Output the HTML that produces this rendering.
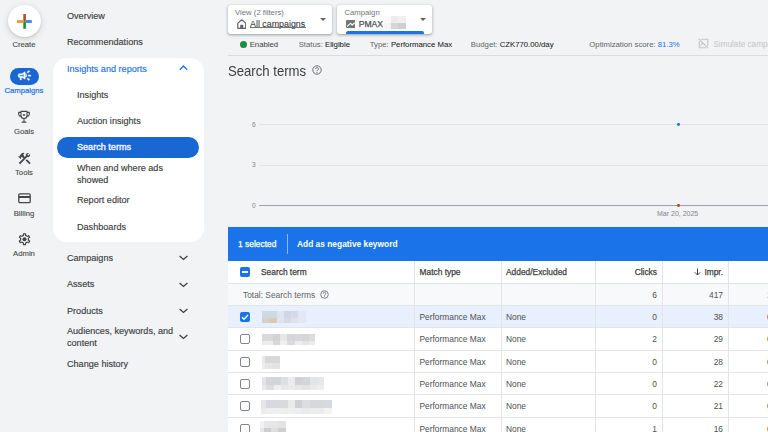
<!DOCTYPE html>
<html><head><meta charset="utf-8">
<style>
*{margin:0;padding:0;box-sizing:border-box}
html,body{width:768px;height:432px;overflow:hidden;background:#f1f3f4;font-family:"Liberation Sans",sans-serif;color:#3c4043}
.a{position:absolute;white-space:nowrap}
.rail{font-size:7.7px;color:#444746;-webkit-text-stroke:0.1px #444746;text-align:center;width:48px;left:0}
.nav{font-size:9.1px;color:#3c4043;left:67px;-webkit-text-stroke:0.15px #3c4043}
.sub{left:77px}
.chev{position:absolute;left:178.9px;width:9px;height:5.5px;overflow:visible}
.st{font-size:7.75px;color:#5f6368}
.st b{font-weight:normal;color:#202124;-webkit-text-stroke:0.05px #202124}
.hline{position:absolute;left:228px;width:540px;height:1px;background:#e3e4e6}
.vline{position:absolute;width:1px;background:#e3e4e6}
.th{font-size:8.4px;color:#3c4043;-webkit-text-stroke:0.25px #3c4043}
.td{font-size:8.4px;color:#4d5156}
.r{text-align:right}
.cb{position:absolute;left:240px;width:10px;height:10px;border:1.7px solid #80868b;border-radius:2px}
.blur{position:absolute;background:#dadce0;filter:blur(1.2px);opacity:.8}
</style></head><body>

<!-- LEFT RAIL -->
<div class="a" style="left:7.8px;top:4.6px;width:33.3px;height:32.8px;border-radius:50%;background:#fff;box-shadow:0 1px 2px rgba(60,64,67,.18),0 2px 6px 1px rgba(60,64,67,.12)"></div>
<svg class="a" style="left:16px;top:13px" width="17" height="17" viewBox="0 0 17 17"><rect x="7.3" y="1" width="2.6" height="7.5" fill="#b0502a"/><rect x="7.3" y="8.5" width="2.6" height="7.3" fill="#1e8e3e"/><rect x="0.9" y="7" width="6.4" height="3" fill="#e6a23c"/><rect x="9.9" y="7" width="5.9" height="3" fill="#4a8af4"/></svg>
<div class="a rail" style="top:39.5px">Create</div>

<div class="a" style="left:9.6px;top:67.7px;width:29px;height:17px;border-radius:9px;background:#1a67d2"></div>
<svg class="a" style="left:16.5px;top:68.3px" width="15" height="15" viewBox="0 0 24 24"><path fill="#fff" stroke="#fff" stroke-width="0.7" d="M18 11v2h4v-2h-4zm-2 6.61c.96.71 2.21 1.65 3.2 2.39.4-.53.8-1.070 1.2-1.6-.99-.74-2.240-1.680-3.2-2.4-.4.54-.8 1.080-1.2 1.61zM20.4 5.6c-.4-.53-.8-1.070-1.200-1.600-.99.74-2.240 1.680-3.200 2.400.4.53.8 1.070 1.200 1.600.96-.72 2.210-1.650 3.200-2.400zM4 9c-1.1 0-2 .9-2 2v2c0 1.1.9 2 2 2h1v4h2v-4h1l5 3V6L8 9H4zm5.03 1.71L11 9.53v4.940l-1.970-1.180-.48-.29H4v-2h4.550l.48-.29zM15.5 12c0-1.330-.58-2.530-1.500-3.350v6.690c.92-.81 1.500-2.010 1.500-3.340z"/></svg>
<div class="a rail" style="top:85.8px;color:#1a73e8;-webkit-text-stroke:0.2px #1a73e8">Campaigns</div>

<svg class="a" style="left:16.8px;top:110px" width="14" height="14" viewBox="0 0 14 14"><path d="M4 1.4h6v4.2a3 3 0 0 1-6 0z M4 2.4H1.7v1.8a2.3 2.3 0 0 0 2.5 2.1 M10 2.4h2.3v1.8a2.3 2.3 0 0 1-2.5 2.1 M7 8.6v3 M4.6 12.1h4.8" fill="none" stroke="#444746" stroke-width="1.1"/><circle cx="7" cy="5" r="1.05" fill="#444746"/></svg>
<div class="a rail" style="top:126.9px">Goals</div>

<svg class="a" style="left:17px;top:150.5px" width="15" height="15" viewBox="0 0 24 24"><path fill="#444746" d="M13.783 15.172l2.121-2.121 5.996 5.996-2.121 2.121zM17.5 10c1.93 0 3.5-1.57 3.5-3.5 0-.58-.16-1.12-.41-1.6l-2.7 2.7-1.49-1.49 2.7-2.7c-.48-.25-1.02-.41-1.6-.41C15.57 3 14 4.57 14 6.5c0 .41.08.8.21 1.16l-1.85 1.85-1.78-1.78.71-.71-1.410-1.410L12 3.49c-1.17-1.17-3.07-1.17-4.24 0L4.22 7.03l1.41 1.41H2.81l-.71.71 3.540 3.540.71-.71V9.15l1.410 1.410.71-.71 1.780 1.780-7.410 7.410 2.120 2.120L16.340 9.790c.36.13.75.21 1.160.21z"/></svg>
<div class="a rail" style="top:167.9px">Tools</div>

<svg class="a" style="left:17.5px;top:193px" width="13" height="10.5" viewBox="0 0 13 10.5"><rect x="0.8" y="0.8" width="11.4" height="8.9" rx="1.2" fill="none" stroke="#444746" stroke-width="1.3"/><rect x="0.8" y="3" width="11.4" height="2" fill="#444746"/></svg>
<div class="a rail" style="top:208.9px">Billing</div>

<svg class="a" style="left:16.7px;top:231.9px" width="15" height="14.4" viewBox="0 0 24 24"><path fill="#444746" d="M19.43 12.98c.04-.32.07-.64.07-.98 0-.34-.03-.66-.07-.98l2.11-1.65c.19-.15.24-.42.12-.64l-2-3.46c-.09-.16-.26-.25-.44-.25-.06 0-.12.01-.17.03l-2.49 1c-.52-.4-1.08-.73-1.69-.98l-.38-2.65C14.46 2.18 14.25 2 14 2h-4c-.25 0-.46.18-.49.42l-.38 2.65c-.61.25-1.17.59-1.69.98l-2.49-1c-.06-.02-.12-.03-.18-.03-.17 0-.34.09-.43.25l-2 3.46c-.13.22-.07.49.12.64l2.11 1.65c-.04.32-.07.65-.07.98 0 .33.03.66.07.98l-2.11 1.65c-.19.15-.24.42-.12.64l2 3.46c.09.16.26.25.44.25.06 0 .12-.01.17-.03l2.49-1c.52.4 1.08.73 1.69.98l.38 2.65c.03.24.24.42.49.42h4c.25 0 .46-.18.49-.42l.38-2.65c.61-.25 1.17-.59 1.69-.98l2.49 1c.06.02.12.03.18.03.17 0 .34-.09.43-.25l2-3.46c.12-.22.07-.49-.12-.64l-2.11-1.65zm-1.98-1.71c.04.31.05.52.05.73 0 .21-.02.43-.05.73l-.14 1.13.89.7 1.08.84-.7 1.21-1.27-.51-1.04-.42-.9.68c-.43.32-.84.56-1.25.73l-1.06.43-.16 1.13-.2 1.35h-1.4l-.19-1.35-.16-1.13-1.06-.43c-.43-.18-.83-.41-1.23-.71l-.91-.7-1.06.43-1.27.51-.7-1.21 1.08-.84.89-.7-.14-1.13c-.03-.31-.05-.54-.05-.74s.02-.43.05-.73l.14-1.13-.89-.7-1.08-.84.7-1.21 1.27.51 1.04.42.9-.68c.43-.32.84-.56 1.25-.73l1.06-.43.16-1.13.2-1.35h1.39l.19 1.35.16 1.13 1.06.43c.43.18.83.41 1.23.71l.91.7 1.06-.43 1.27-.51.7 1.21-1.07.85-.89.7.14 1.13z"/><circle cx="12" cy="12" r="3.4" fill="#444746"/></svg>
<div class="a rail" style="top:249.4px">Admin</div>

<!-- NAV -->
<div class="a nav" style="top:11px">Overview</div>
<div class="a nav" style="top:37px">Recommendations</div>
<div class="a" style="left:53px;top:57.5px;width:151px;height:184.5px;background:#fff;border-radius:14px"></div>
<div class="a nav" style="top:63.5px;color:#1a73e8;-webkit-text-stroke-color:#1a73e8">Insights and reports</div>
<svg class="chev" style="top:65px" viewBox="0 0 9 5.5"><path d="M0.8 4.7L4.5 1l3.7 3.7" fill="none" stroke="#1a73e8" stroke-width="1.3"/></svg>
<div class="a nav sub" style="top:90px">Insights</div>
<div class="a nav sub" style="top:116px">Auction insights</div>
<div class="a" style="left:57.4px;top:136.6px;width:141.8px;height:21.9px;border-radius:11px;background:#1967d2"></div>
<div class="a nav sub" style="top:142.2px;color:#fff;-webkit-text-stroke:0.3px #fff">Search terms</div>
<div class="a nav sub" style="top:163px">When and where ads</div>
<div class="a nav sub" style="top:175px">showed</div>
<div class="a nav sub" style="top:195px">Report editor</div>
<div class="a nav sub" style="top:221.5px">Dashboards</div>
<div class="a nav" style="top:253px">Campaigns</div>
<svg class="chev" style="top:255.1px" viewBox="0 0 9 5.5"><path d="M0.6 0.9L4.5 4.4l3.9-3.5" fill="none" stroke="#3c4043" stroke-width="1.3"/></svg>
<div class="a nav" style="top:279px">Assets</div>
<svg class="chev" style="top:281.6px" viewBox="0 0 9 5.5"><path d="M0.6 0.9L4.5 4.4l3.9-3.5" fill="none" stroke="#3c4043" stroke-width="1.3"/></svg>
<div class="a nav" style="top:305.5px">Products</div>
<svg class="chev" style="top:307.6px" viewBox="0 0 9 5.5"><path d="M0.6 0.9L4.5 4.4l3.9-3.5" fill="none" stroke="#3c4043" stroke-width="1.3"/></svg>
<div class="a nav" style="top:326px">Audiences, keywords, and</div>
<div class="a nav" style="top:338px">content</div>
<svg class="chev" style="top:334.1px" viewBox="0 0 9 5.5"><path d="M0.6 0.9L4.5 4.4l3.9-3.5" fill="none" stroke="#3c4043" stroke-width="1.3"/></svg>
<div class="a nav" style="top:358.5px">Change history</div>

<!-- TOP SELECTORS -->
<div class="a" style="left:228px;top:5px;width:104px;height:29px;background:#fff;border-radius:3px;box-shadow:0 1px 2px rgba(60,64,67,.3),0 1px 3px 1px rgba(60,64,67,.15)"></div>
<div class="a st" style="left:235px;top:8px;color:#70757a">View (2 filters)</div>
<svg class="a" style="left:236.6px;top:19px" width="9.5" height="10" viewBox="0 0 9.5 10"><path d="M0.8 9.3V4.1L4.75 0.8 8.7 4.1V9.3z" fill="none" stroke="#5f6368" stroke-width="1.2" stroke-linejoin="round"/><rect x="3.2" y="5.8" width="3.1" height="3.5" fill="#5f6368"/></svg>
<div class="a" style="left:250px;top:19px;font-size:8.9px;color:#3c4043;-webkit-text-stroke:0.1px #3c4043">All campaigns</div><div class="a" style="left:250px;top:27px;width:55.8px;height:0.9px;background:#70757a"></div>
<svg class="a" style="left:320px;top:18px" width="6" height="3" viewBox="0 0 6 3"><path d="M0 0h6L3 3z" fill="#5f6368"/></svg>

<div class="a" style="left:337px;top:5px;width:95px;height:29px;background:#fff;border-radius:3px;box-shadow:0 1px 2px rgba(60,64,67,.3),0 1px 3px 1px rgba(60,64,67,.15);overflow:hidden"><div style="position:absolute;left:8.6px;top:26px;width:78px;height:3px;background:#1a73e8;border-radius:2px 2px 0 0"></div></div>
<div class="a st" style="left:344.4px;top:8px;color:#70757a">Campaign</div>
<svg class="a" style="left:345.6px;top:20px" width="9.6" height="8" viewBox="0 0 9.6 8"><rect width="9.6" height="8" rx="1.1" fill="#757575"/><path d="M1.5 6.1L4.6 3.2 6.2 5.1 8.4 3" fill="none" stroke="#fff" stroke-width="1.1" stroke-linejoin="round" stroke-linecap="round"/></svg>
<div class="a" style="left:358.7px;top:19px;font-size:8.6px;color:#4d5156;-webkit-text-stroke:0.25px #4d5156">PMAX</div>
<div class="a" style="left:0;top:0;filter:blur(0.5px)"><div class="a" style="left:383.4px;top:16.1px;width:7.8px;height:7.2px;background:#fafafa"></div><div class="a" style="left:391px;top:16.1px;width:7.2px;height:7.2px;background:#ececec"></div><div class="a" style="left:398px;top:16.1px;width:7.6px;height:7.2px;background:#f0f0f0"></div><div class="a" style="left:383.4px;top:23.1px;width:7.8px;height:6px;background:#f5f5f5"></div><div class="a" style="left:391px;top:23.1px;width:7.2px;height:6px;background:#d6d6d6"></div><div class="a" style="left:398px;top:23.1px;width:7.6px;height:6px;background:#cfcfcf"></div></div>
<svg class="a" style="left:420px;top:18px" width="6" height="3" viewBox="0 0 6 3"><path d="M0 0h6L3 3z" fill="#5f6368"/></svg>

<!-- STATUS ROW -->
<div class="a" style="left:240px;top:41px;width:7px;height:7px;border-radius:50%;background:#1e8e3e"></div>
<div class="a st" style="left:249.7px;top:40px;color:#3c4043">Enabled</div>
<div class="a st" style="left:298.7px;top:40px">Status: <b>Eligible</b></div>
<div class="a st" style="left:369.8px;top:40px">Type: <b>Performance Max</b></div>
<div class="a st" style="left:470.8px;top:40px">Budget: <b>CZK770.00/day</b></div>
<div class="a st" style="left:589.3px;top:40px">Optimization score: <span style="color:#1a73e8">81.3%</span></div>
<svg class="a" style="left:698.3px;top:37.8px" width="11" height="11" viewBox="0 0 11 11"><path d="M1.3 3v6.7h6.7 M3 1.3h6.7V8" fill="none" stroke="#c4c7c5" stroke-width="1.1"/><path d="M0.6 0.6l9.8 9.8 M2.5 7.5l2.2-2.4 1.6 1.3" fill="none" stroke="#c4c7c5" stroke-width="1.1"/></svg>
<div class="a st" style="left:713.4px;top:40px;font-size:8.2px;color:#c4c7c5">Simulate campaign</div>
<div class="a" style="left:228px;top:55px;width:540px;height:1px;background:#dadce0"></div>

<!-- TITLE -->
<div class="a" style="left:228.3px;top:63.3px;font-size:14.6px;color:#3c4043;transform:scaleX(0.9);transform-origin:0 0">Search terms</div>
<svg class="a" style="left:312.2px;top:64.8px" width="10" height="10" viewBox="0 0 10 10"><circle cx="5" cy="5" r="4.2" fill="none" stroke="#5f6368" stroke-width="0.9"/><path d="M3.6 4a1.4 1.4 0 1 1 2.1 1.2c-.5.3-.7.5-.7 1.1" fill="none" stroke="#5f6368" stroke-width="0.9"/><circle cx="5" cy="7.6" r=".55" fill="#5f6368"/></svg>

<!-- CHART -->
<div class="a" style="left:252px;top:120.5px;font-size:6.6px;color:#80868b">6</div>
<div class="a" style="left:252px;top:161px;font-size:6.6px;color:#80868b">3</div>
<div class="a" style="left:252px;top:201.5px;font-size:6.6px;color:#80868b">0</div>
<div class="a" style="left:259px;top:124px;width:509px;height:1px;background:#e3e4e6"></div>
<div class="a" style="left:259px;top:164.5px;width:509px;height:1px;background:#e3e4e6"></div>
<div class="a" style="left:259px;top:205px;width:509px;height:1.2px;background:#9aa0a6"></div>
<div class="a" style="left:676.8px;top:123.1px;width:2.8px;height:2.8px;border-radius:50%;background:#1a73e8"></div>
<div class="a" style="left:676.8px;top:204.3px;width:2.8px;height:2.8px;border-radius:50%;background:#b3471b"></div>
<div class="a" style="left:657px;top:209.5px;font-size:7px;color:#80868b">Mar 20, 2025</div>

<!-- SELECTION BAR -->
<div class="a" style="left:228px;top:227px;width:540px;height:33.5px;background:#1a73e8"></div>
<div class="a" style="left:238px;top:238.5px;font-size:8.45px;color:#fff;-webkit-text-stroke:0.25px #fff">1 selected</div>
<div class="a" style="left:287px;top:234px;width:1px;height:20px;background:rgba(255,255,255,.5)"></div>
<div class="a" style="left:297px;top:238.5px;font-size:8.4px;color:#fff;font-weight:bold">Add as negative keyword</div>

<!-- TABLE -->
<div class="a" style="left:228px;top:260.5px;width:540px;height:172px;background:#fff"></div>
<div class="a" style="left:228px;top:283.5px;width:540px;height:22px;background:#f8f9fa"></div>
<div class="a" style="left:228px;top:305.5px;width:540px;height:22px;background:#e8f0fe"></div>
<div class="hline" style="top:282.8px;height:1.4px;background:#dfe1e3"></div>
<div class="hline" style="top:305px"></div>
<div class="hline" style="top:327.3px"></div>
<div class="hline" style="top:349.6px"></div>
<div class="hline" style="top:371.9px"></div>
<div class="hline" style="top:394.2px"></div>
<div class="hline" style="top:416.5px"></div>
<div class="vline" style="left:414px;top:260.5px;height:172px"></div>
<div class="vline" style="left:501px;top:260.5px;height:172px"></div>
<div class="vline" style="left:595px;top:260.5px;height:172px"></div>
<div class="vline" style="left:662px;top:260.5px;height:172px"></div>
<div class="vline" style="left:728px;top:260.5px;height:172px"></div>

<!-- header -->
<div class="a" style="left:240px;top:267px;width:10px;height:10px;border-radius:2px;background:#1a73e8"></div>
<div class="a" style="left:242.3px;top:271.3px;width:5.4px;height:1.4px;background:#fff"></div>
<div class="a th" style="left:261px;top:267px">Search term</div>
<div class="a th" style="left:419.5px;top:267px">Match type</div>
<div class="a th" style="left:506px;top:267px">Added/Excluded</div>
<div class="a th r" style="left:600px;width:57px;top:267px">Clicks</div>
<svg class="a" style="left:694px;top:268px" width="7" height="8" viewBox="0 0 7 8"><path d="M3.5 0.5v6.5 M0.8 4.3l2.7 2.7 2.7-2.7" fill="none" stroke="#3c4043" stroke-width="1"/></svg>
<div class="a th r" style="left:666px;width:57px;top:267px">Impr.</div>

<!-- total -->
<div class="a td" style="left:243px;top:289.5px;color:#5f6368">Total: Search terms</div>
<svg class="a" style="left:320px;top:289.5px" width="9" height="9" viewBox="0 0 10 10"><circle cx="5" cy="5" r="4.2" fill="none" stroke="#5f6368" stroke-width="0.9"/><path d="M3.6 4a1.4 1.4 0 1 1 2.1 1.2c-.5.3-.7.5-.7 1.1" fill="none" stroke="#5f6368" stroke-width="0.9"/><circle cx="5" cy="7.6" r=".55" fill="#5f6368"/></svg>
<div class="a td r" style="left:600px;width:57px;top:289.5px">6</div>
<div class="a td r" style="left:666px;width:57px;top:289.5px">417</div>

<!-- row 1 -->
<div class="a" style="left:240px;top:312px;width:10px;height:10px;border-radius:2px;background:#1a73e8"></div>
<svg class="a" style="left:240px;top:312px" width="10" height="10" viewBox="0 0 10 10"><path d="M2 5.2l2 2 4-4.2" fill="none" stroke="#fff" stroke-width="1.3"/></svg>
<div class="a td" style="left:419.5px;top:312px">Performance Max</div>
<div class="a td" style="left:506px;top:312px">None</div>
<div class="a td r" style="left:600px;width:57px;top:312px">0</div>
<div class="a td r" style="left:666px;width:57px;top:312px">38</div>

<!-- rows -->
<div class="a td" style="left:767px;top:289.5px">1</div><div class="a td" style="left:767px;top:312px">0</div><div class="a td" style="left:767px;top:334.3px">0</div><div class="a td" style="left:767px;top:356.6px">0</div><div class="a td" style="left:767px;top:378.9px">0</div><div class="a td" style="left:767px;top:401.2px">0</div><div class="a td" style="left:767px;top:423.5px">0</div>
<div class="cb" style="top:334.3px"></div>
<div class="a td" style="left:419.5px;top:334.3px">Performance Max</div>
<div class="a td" style="left:506px;top:334.3px">None</div>
<div class="a td r" style="left:600px;width:57px;top:334.3px">2</div>
<div class="a td r" style="left:666px;width:57px;top:334.3px">29</div>

<div class="cb" style="top:356.6px"></div>
<div class="a td" style="left:419.5px;top:356.6px">Performance Max</div>
<div class="a td" style="left:506px;top:356.6px">None</div>
<div class="a td r" style="left:600px;width:57px;top:356.6px">0</div>
<div class="a td r" style="left:666px;width:57px;top:356.6px">28</div>

<div class="cb" style="top:378.9px"></div>
<div class="a td" style="left:419.5px;top:378.9px">Performance Max</div>
<div class="a td" style="left:506px;top:378.9px">None</div>
<div class="a td r" style="left:600px;width:57px;top:378.9px">0</div>
<div class="a td r" style="left:666px;width:57px;top:378.9px">22</div>

<div class="cb" style="top:401.2px"></div>
<div class="a td" style="left:419.5px;top:401.2px">Performance Max</div>
<div class="a td" style="left:506px;top:401.2px">None</div>
<div class="a td r" style="left:600px;width:57px;top:401.2px">0</div>
<div class="a td r" style="left:666px;width:57px;top:401.2px">21</div>

<div class="cb" style="top:423.5px"></div>
<div class="a td" style="left:419.5px;top:423.5px">Performance Max</div>
<div class="a td" style="left:506px;top:423.5px">None</div>
<div class="a td r" style="left:600px;width:57px;top:423.5px">1</div>
<div class="a td r" style="left:666px;width:57px;top:423.5px">16</div>

<div style="position:absolute;left:0;top:0;filter:blur(0.5px)">
<div class="a" style="left:262.1px;top:311.0px;width:7.8px;height:7.6px;background:#cfd8e5"></div><div class="a" style="left:262.1px;top:318.0px;width:7.8px;height:5.3px;background:#d5d0c8"></div>
<div class="a" style="left:269.3px;top:311.0px;width:8.0px;height:7.6px;background:#cfd8e5"></div><div class="a" style="left:269.3px;top:318.0px;width:8.0px;height:5.3px;background:#d4cbbb"></div>
<div class="a" style="left:276.8px;top:311.0px;width:7.7px;height:7.6px;background:#dfe5f0"></div><div class="a" style="left:276.8px;top:318.0px;width:7.7px;height:5.3px;background:#e0e4ec"></div>
<div class="a" style="left:283.8px;top:311.0px;width:7.6px;height:7.6px;background:#cfd7e3"></div><div class="a" style="left:283.8px;top:318.0px;width:7.6px;height:5.3px;background:#d3dbe6"></div>
<div class="a" style="left:290.8px;top:311.0px;width:8.0px;height:7.6px;background:#d3dbe8"></div><div class="a" style="left:290.8px;top:318.0px;width:8.0px;height:5.3px;background:#dfe2ea"></div>
<div class="a" style="left:298.2px;top:311.0px;width:7.7px;height:7.6px;background:#e2e8f3"></div><div class="a" style="left:298.2px;top:318.0px;width:7.7px;height:5.3px;background:#e2e8f2"></div>
<div class="a" style="left:262.2px;top:333.7px;width:11.7px;height:7.9px;background:#d9d9db"></div><div class="a" style="left:262.2px;top:341.0px;width:11.7px;height:4.0px;background:#ededee"></div>
<div class="a" style="left:273.3px;top:333.7px;width:7.5px;height:7.9px;background:#d3d3d5"></div><div class="a" style="left:273.3px;top:341.0px;width:7.5px;height:4.0px;background:#d8d8da"></div>
<div class="a" style="left:280.2px;top:333.7px;width:7.6px;height:7.9px;background:#e6e6e6"></div><div class="a" style="left:280.2px;top:341.0px;width:7.6px;height:4.0px;background:#efefef"></div>
<div class="a" style="left:287.2px;top:333.7px;width:8.0px;height:7.9px;background:#d6d6d8"></div><div class="a" style="left:287.2px;top:341.0px;width:8.0px;height:4.0px;background:#dcdcde"></div>
<div class="a" style="left:294.6px;top:333.7px;width:7.5px;height:7.9px;background:#d9d9db"></div><div class="a" style="left:294.6px;top:341.0px;width:7.5px;height:4.0px;background:#ededee"></div>
<div class="a" style="left:301.5px;top:333.7px;width:8.0px;height:7.9px;background:#d6d6d8"></div><div class="a" style="left:301.5px;top:341.0px;width:8.0px;height:4.0px;background:#e6e6e7"></div>
<div class="a" style="left:308.9px;top:333.7px;width:5.7px;height:7.9px;background:#dcdcde"></div><div class="a" style="left:308.9px;top:341.0px;width:5.7px;height:4.0px;background:#ebebec"></div>
<div class="a" style="left:262.2px;top:355.9px;width:3.4px;height:7.6px;background:#ebebeb"></div><div class="a" style="left:262.2px;top:362.9px;width:3.4px;height:5.7px;background:#eeeeee"></div>
<div class="a" style="left:265.0px;top:355.9px;width:7.6px;height:7.6px;background:#d8d8da"></div><div class="a" style="left:265.0px;top:362.9px;width:7.6px;height:5.7px;background:#e6e6e7"></div>
<div class="a" style="left:272.0px;top:355.9px;width:8.4px;height:7.6px;background:#d8d8da"></div><div class="a" style="left:272.0px;top:362.9px;width:8.4px;height:5.7px;background:#e3e3e4"></div>
<div class="a" style="left:261.7px;top:377.3px;width:5.3px;height:7.8px;background:#e4e4e6"></div><div class="a" style="left:261.7px;top:384.5px;width:5.3px;height:5.9px;background:#e8e8ea"></div>
<div class="a" style="left:266.4px;top:377.3px;width:8.0px;height:7.8px;background:#d4d5d9"></div><div class="a" style="left:266.4px;top:384.5px;width:8.0px;height:5.9px;background:#dcdde0"></div>
<div class="a" style="left:273.8px;top:377.3px;width:7.5px;height:7.8px;background:#d4d5d9"></div><div class="a" style="left:273.8px;top:384.5px;width:7.5px;height:5.9px;background:#eeeeef"></div>
<div class="a" style="left:280.7px;top:377.3px;width:7.9px;height:7.8px;background:#dedfe0"></div><div class="a" style="left:280.7px;top:384.5px;width:7.9px;height:5.9px;background:#e6e7e8"></div>
<div class="a" style="left:288.0px;top:377.3px;width:7.6px;height:7.8px;background:#ececec"></div><div class="a" style="left:288.0px;top:384.5px;width:7.6px;height:5.9px;background:#eaeaea"></div>
<div class="a" style="left:295.0px;top:377.3px;width:7.8px;height:7.8px;background:#d1d2d6"></div><div class="a" style="left:295.0px;top:384.5px;width:7.8px;height:5.9px;background:#e6e7e9"></div>
<div class="a" style="left:302.2px;top:377.3px;width:8.0px;height:7.8px;background:#d4d5d9"></div><div class="a" style="left:302.2px;top:384.5px;width:8.0px;height:5.9px;background:#e3e4e6"></div>
<div class="a" style="left:309.6px;top:377.3px;width:7.8px;height:7.8px;background:#e3e4e6"></div><div class="a" style="left:309.6px;top:384.5px;width:7.8px;height:5.9px;background:#eaeaeb"></div>
<div class="a" style="left:316.8px;top:377.3px;width:6.8px;height:7.8px;background:#e6e7e8"></div><div class="a" style="left:316.8px;top:384.5px;width:6.8px;height:5.9px;background:#eeeef0"></div>
<div class="a" style="left:261.0px;top:400.2px;width:6.0px;height:7.9px;background:#e6e6e8"></div><div class="a" style="left:261.0px;top:407.5px;width:6.0px;height:6.1px;background:#ebebec"></div>
<div class="a" style="left:266.4px;top:400.2px;width:8.0px;height:7.9px;background:#d8d9de"></div><div class="a" style="left:266.4px;top:407.5px;width:8.0px;height:6.1px;background:#eeeeef"></div>
<div class="a" style="left:273.8px;top:400.2px;width:7.5px;height:7.9px;background:#d8d9de"></div><div class="a" style="left:273.8px;top:407.5px;width:7.5px;height:6.1px;background:#eeeff0"></div>
<div class="a" style="left:280.7px;top:400.2px;width:7.9px;height:7.9px;background:#dadadc"></div><div class="a" style="left:280.7px;top:407.5px;width:7.9px;height:6.1px;background:#ededee"></div>
<div class="a" style="left:288.0px;top:400.2px;width:7.9px;height:7.9px;background:#eaeaea"></div><div class="a" style="left:288.0px;top:407.5px;width:7.9px;height:6.1px;background:#eef0f2"></div>
<div class="a" style="left:295.3px;top:400.2px;width:7.5px;height:7.9px;background:#cfd0d3"></div><div class="a" style="left:295.3px;top:407.5px;width:7.5px;height:6.1px;background:#eceef0"></div>
<div class="a" style="left:302.2px;top:400.2px;width:8.0px;height:7.9px;background:#dcdde1"></div><div class="a" style="left:302.2px;top:407.5px;width:8.0px;height:6.1px;background:#eaeaeb"></div>
<div class="a" style="left:309.6px;top:400.2px;width:7.8px;height:7.9px;background:#d8d8da"></div><div class="a" style="left:309.6px;top:407.5px;width:7.8px;height:6.1px;background:#ebeced"></div>
<div class="a" style="left:316.8px;top:400.2px;width:7.8px;height:7.9px;background:#d8d8da"></div><div class="a" style="left:316.8px;top:407.5px;width:7.8px;height:6.1px;background:#ebeced"></div>
<div class="a" style="left:324.0px;top:400.2px;width:7.7px;height:7.9px;background:#d8d9de"></div><div class="a" style="left:324.0px;top:407.5px;width:7.7px;height:6.1px;background:#f3f3f0"></div>
<div class="a" style="left:260.3px;top:420.9px;width:4.3px;height:7.4px;background:#f0f2f6"></div><div class="a" style="left:260.3px;top:427.7px;width:4.3px;height:6.9px;background:#e3e6ee"></div>
<div class="a" style="left:264.0px;top:420.9px;width:7.6px;height:7.4px;background:#e6e6e6"></div><div class="a" style="left:264.0px;top:427.7px;width:7.6px;height:6.9px;background:#cdcdcd"></div>
<div class="a" style="left:271.0px;top:420.9px;width:7.6px;height:7.4px;background:#e6e6e6"></div><div class="a" style="left:271.0px;top:427.7px;width:7.6px;height:6.9px;background:#dedede"></div>
<div class="a" style="left:278.0px;top:420.9px;width:8.1px;height:7.4px;background:#e3e3e3"></div><div class="a" style="left:278.0px;top:427.7px;width:8.1px;height:6.9px;background:#cfcfcf"></div>
</div>
</body></html>
